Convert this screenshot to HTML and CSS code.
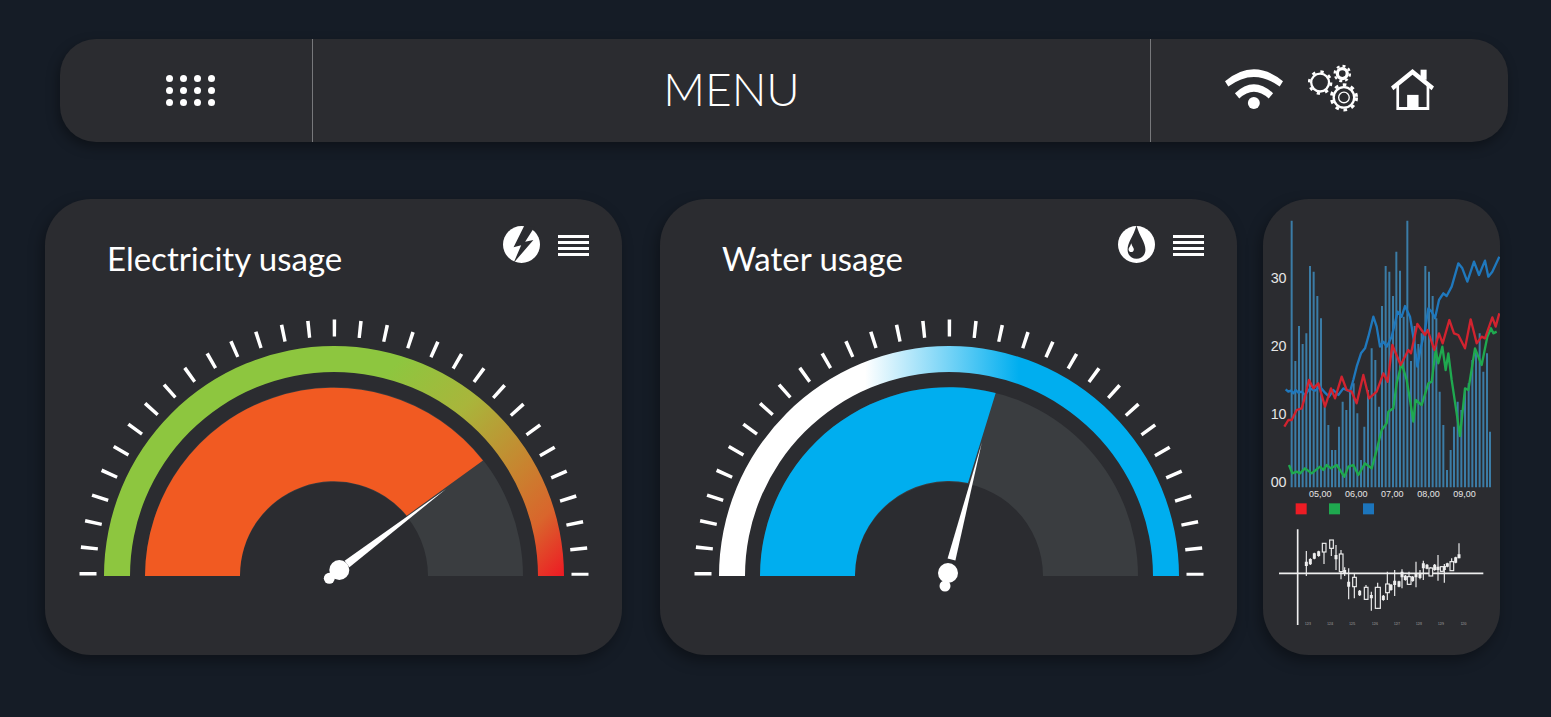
FILE: index.html
```html
<!DOCTYPE html>
<html lang="en">
<head>
    <meta charset="UTF-8">
    <title>Usage Dashboard</title>
    <link rel="stylesheet" href="styles.css">
</head>
<body>
    <!-- Top menu bar -->
    <header class="menu-bar">
        <div class="menu-left">
            <div class="dot-grid">
                <span></span><span></span><span></span><span></span>
                <span></span><span></span><span></span><span></span>
                <span></span><span></span><span></span><span></span>
            </div>
        </div>
        <div class="menu-title">MENU</div>
        <div class="menu-right">
            <svg class="icon-wifi" viewBox="0 0 175 122">
                <path d="M0 36Q87 -36 175 36L165 52Q87 -6 10 52Z"/>
                <path d="M30 72Q87 18 145 72L132 88Q87 47 43 88Z"/>
                <circle cx="87" cy="102" r="18"/>
            </svg>
            <svg class="icon-gears" viewBox="474 104 174 148">
                <g class="gear-lines">
                    <circle cx="510" cy="160" r="27" stroke-width="7"/>
                    <circle cx="510" cy="160" r="33" stroke-width="8" stroke-dasharray="10 15.9"/>
                    <circle cx="577" cy="133" r="15" stroke-width="10"/>
                    <circle cx="577" cy="133" r="23" stroke-width="7" stroke-dasharray="9 9.06"/>
                    <circle cx="582" cy="205" r="31" stroke-width="7"/>
                    <circle cx="582" cy="205" r="38" stroke-width="9" stroke-dasharray="11 13.9"/>
                    <circle cx="582" cy="205" r="16" stroke-width="4"/>
                </g>
            </svg>
            <svg class="icon-home" viewBox="724 118 128 122">
                <path d="M812 120H830V150H812Z"/>
                <path d="M724 170L788 118L852 170L845 181L788 135L731 181Z"/>
                <path d="M740 165L748 160V231H830V160L838 165V240H740Z"/>
                <path d="M772 195H806V235H772Z"/>
            </svg>
        </div>
    </header>

    <main class="card-row">
        <!-- Electricity -->
        <section class="card">
            <div class="card-head">
                <h2 class="card-title">Electricity usage</h2>
                <div class="card-tools">
                    <svg class="badge" viewBox="70 48 112 112">
                        <circle cx="126" cy="104" r="56" fill="#fff"/>
                        <path d="M135 46L102 112L125 106L102 160L162 90L137 96L166 50Z" fill="#2b2c30"/>
                    </svg>
                    <div class="lines"><span></span><span></span><span></span><span></span></div>
                </div>
            </div>
            <svg class="gauge" viewBox="0 0 577 356">
                <defs>
                    <linearGradient id="heat" gradientUnits="userSpaceOnUse" x1="40" y1="-190" x2="232" y2="-5">
                        <stop offset="0" stop-color="#8dc63f"/>
                        <stop offset="0.3" stop-color="#a9b53b"/>
                        <stop offset="0.62" stop-color="#c9822f"/>
                        <stop offset="0.8" stop-color="#d9652c"/>
                        <stop offset="1" stop-color="#ed1c24"/>
                    </linearGradient>
                    <clipPath id="top-half"><rect x="-260" y="-260" width="520" height="262"/></clipPath>
                    <g id="ticks" clip-path="url(#top-half)">
                        <circle class="tick-ring" cy="-2" r="246" stroke-dasharray="3.5 22.26" stroke-dashoffset="1.75"/>
                    </g>
                </defs>
                <g transform="translate(289 277)">
                    <use href="#ticks"/>
                    <path fill="url(#heat)" d="M-230 0A230 230 0 0 1 230 0H204A204 204 0 0 0 -204 0Z"/>
                    <path class="track" d="M-189 0A189 189 0 0 1 189 0H94A94 94 0 0 0 -94 0Z"/>
                    <path fill="#f15a22" d="M-189 0A189 189 0 0 1 149 -115.5L72.7 -60.3A94 94 0 0 0 -94 0Z"/>
                    <g class="needle">
                        <path d="M112 -87L15.4 -8.8L10.6 -15.2Z"/>
                        <circle cx="5.3" cy="-6" r="10"/>
                        <circle cx="-4.7" cy="2.3" r="5.5"/>
                    </g>
                </g>
            </svg>
        </section>

        <!-- Water -->
        <section class="card">
            <div class="card-head">
                <h2 class="card-title">Water usage</h2>
                <div class="card-tools">
                    <svg class="badge" viewBox="54 32 112 112">
                        <circle cx="110" cy="88" r="56" fill="#fff"/>
                        <path d="M110 30C102 62 83 80 83 104C83 120 95 131 110 131C125 131 137 120 137 104C137 80 118 62 110 30Z" fill="#2b2c30"/>
                        <path d="M94 84C91 94 86 98 86 103C86 108 90 111 94 111C98 111 102 108 102 103C102 98 97 94 94 84Z" fill="#fff"/>
                    </svg>
                    <div class="lines"><span></span><span></span><span></span><span></span></div>
                </div>
            </div>
            <svg class="gauge" viewBox="0 0 577 356">
                <defs>
                    <linearGradient id="cool" gradientUnits="userSpaceOnUse" x1="-150" y1="0" x2="70" y2="0">
                        <stop offset="0" stop-color="#fff"/>
                        <stop offset="0.3" stop-color="#fff"/>
                        <stop offset="1" stop-color="#00aeef"/>
                    </linearGradient>
                </defs>
                <g transform="translate(289 277)">
                    <use href="#ticks"/>
                    <path fill="url(#cool)" d="M-230 0A230 230 0 0 1 230 0H204A204 204 0 0 0 -204 0Z"/>
                    <path class="track" d="M-189 0A189 189 0 0 1 189 0H94A94 94 0 0 0 -94 0Z"/>
                    <path fill="#00aeef" d="M-189 0A189 189 0 0 1 46.7 -183L19 -93A94 94 0 0 0 -94 0Z"/>
                    <g class="needle">
                        <path d="M32.7 -133L6.4 -15.6L-1.4 -17.6Z"/>
                        <circle cx="-1" cy="-3" r="10"/>
                        <circle cx="-4" cy="10" r="5.5"/>
                    </g>
                </g>
            </svg>
        </section>

        <!-- Charts -->
        <section class="card chart-card">
            <svg class="chart" viewBox="24 -3 711 1368">
                <path class="bars" d="M110 862V62M121 862V483M132 862V378M143 862V432M154 862V400M165 862V198M176 862V215M187 862V288M198 862V355M209 862V620M220 862V675M231 862V750M241 862V750M252 862V680M263 862V605M274 862V630M285 862V570M296 862V550M307 862V640M318 862V780M328 862V680M339 862V570M350 862V445M361 862V480M372 862V620M381 862V318M392 862V198M403 862V215M414 862V288M424 862V155M435 862V212M446 862V350M457 862V62M468 862V483M479 862V378M490 862V432M500 862V400M511 862V198M522 862V215M533 862V288M544 862V355M554 862V575M565 862V675M576 862V810M587 862V750M597 862V680M608 862V605M619 862V630M630 862V570M641 862V550M652 862V480M663 862V450M674 862V400M685 862V515M696 862V460M705 862V695"/>
                <polyline class="line line-blue" points="92,568 100,575 108,572 115,580 122,570 130,578 140,575 150,585 165,565 180,572 195,560 210,578 222,590 235,570 250,585 265,565 285,575 295,540 305,500 318,460 330,445 340,410 355,350 365,380 375,440 385,425 395,440 410,410 428,335 440,350 450,318 465,350 478,430 487,500 497,445 510,390 520,325 530,335 540,355 552,300 565,280 575,288 590,260 610,190 622,205 637,245 657,185 672,225 690,182 700,230 712,215 733,170"/>
                <polyline class="line line-green" points="102,795 112,820 125,815 135,820 150,805 170,820 195,800 205,810 215,795 228,805 245,795 268,830 280,800 295,795 310,825 330,790 350,805 365,750 380,690 395,670 400,635 415,625 425,550 440,490 455,540 465,600 475,665 482,600 500,615 520,550 530,545 542,450 550,490 562,440 572,510 580,460 590,540 605,640 615,708 630,565 640,570 660,445 680,495 697,410 708,385 715,400 725,395"/>
                <polyline class="line line-red" points="88,680 100,660 110,660 125,630 140,625 150,590 162,540 175,565 190,550 210,620 228,565 240,595 260,530 275,570 290,575 305,610 325,525 342,595 365,575 385,520 398,545 412,435 437,495 460,450 468,460 487,372 510,405 518,390 538,450 552,400 563,430 583,360 597,400 610,405 630,445 647,358 665,430 680,410 690,415 712,352 722,380 733,340"/>

                <text class="axis-y" x="47" y="248">30</text>
                <text class="axis-y" x="47" y="452">20</text>
                <text class="axis-y" x="47" y="657">10</text>
                <text class="axis-y" x="47" y="860">00</text>
                <text class="axis-x" x="162" y="892">05,00</text>
                <text class="axis-x" x="270" y="892">06,00</text>
                <text class="axis-x" x="378" y="892">07,00</text>
                <text class="axis-x" x="487" y="892">08,00</text>
                <text class="axis-x" x="595" y="892">09,00</text>

                <rect x="122" y="910" width="33" height="33" fill="#ed1c24"/>
                <rect x="222" y="910" width="33" height="33" fill="#1fa94f"/>
                <rect x="324" y="910" width="33" height="33" fill="#1c75bc"/>

                <!-- candlesticks -->
                <g transform="translate(0 870)">
                    <path class="axis" d="M128 118V405M72 250H685"/>
                    <path class="wicks" d="M154 183V258M166 205V225M178 188V208M191 182V200M207 160V222M229 150V198M243 165V240M258 180V268M269 232V258M281 235V328M298 250V325M314 300V318M333 285V330M349 305V362M368 278V357M385 315V332M397 245V330M408 282V302M419 240V318M432 272V292M441 238V295M451 255V272M462 245V285M473 258V275M483 215V292M495 240V268M505 212V270M516 222V238M527 232V258M539 222V242M549 195V272M560 228V245M568 222V278M577 218V232M590 205V242M602 200V220M612 160V205"/>
                    <path class="bodies" d="M154 215V228M166 207V223M178 190V206M191 184V198M243 195V208M269 240V250M281 275V290M314 302V316M349 315V325M385 317V330M408 284V300M419 272V285M432 274V290M441 245V262M451 257V270M473 260V273M483 250V262M495 250V264M505 220V235M516 224V236M539 224V240M549 230V240M568 228V240M577 220V230M602 202V218M612 193V205"/>
                    <g class="hollow">
                        <rect x="202" y="160" width="11" height="26"/>
                        <rect x="224" y="150" width="11" height="25"/>
                        <rect x="253" y="192" width="11" height="53"/>
                        <rect x="293" y="262" width="11" height="28"/>
                        <rect x="328" y="292" width="11" height="36"/>
                        <rect x="361" y="292" width="15" height="63"/>
                        <rect x="392" y="282" width="11" height="26"/>
                        <rect x="457" y="260" width="11" height="23"/>
                        <rect x="522" y="234" width="11" height="24"/>
                        <rect x="556" y="230" width="9" height="14"/>
                        <rect x="585" y="215" width="11" height="27"/>
                    </g>
                    <g class="axis-tiny">
                        <text x="150" y="404">12/3</text>
                        <text x="217" y="404">12/4</text>
                        <text x="283" y="404">12/5</text>
                        <text x="351" y="404">12/6</text>
                        <text x="417" y="404">12/7</text>
                        <text x="483" y="404">12/8</text>
                        <text x="549" y="404">12/9</text>
                        <text x="617" y="404">12/0</text>
                    </g>
                </g>
            </svg>
        </section>
    </main>
</body>
</html>
```

FILE: styles.css
```css
* {
    box-sizing: border-box;
}

body {
    margin: 0;
    height: 717px;
    overflow: hidden;
    background: #151c26;
    font-family: Lato, "Open Sans", sans-serif;
    color: #fff;
}

/* Menu bar */
.menu-bar {
    display: flex;
    height: 103px;
    margin: 39px 43px 0 60px;
    background: #2b2c30;
    border-radius: 36px;
    box-shadow: -2px 5px 12px rgba(0,0,0,0.35);
}

.menu-left {
    width: 253px;
    display: flex;
    align-items: center;
    padding-left: 106px;
    border-right: 1px solid #77787b;
}

.dot-grid {
    display: grid;
    grid-template-columns: repeat(4, 7px);
    grid-auto-rows: 7px;
    column-gap: 7px;
    row-gap: 5px;
}

.dot-grid span {
    background: #fff;
    border-radius: 50%;
}

.menu-title {
    flex: 1;
    text-align: center;
    font-size: 46px;
    font-weight: 300;
    line-height: 99px;
}

.menu-right {
    width: 358px;
    display: flex;
    align-items: flex-start;
    gap: 25px;
    padding: 30px 0 0 74px;
    border-left: 1px solid #77787b;
}

.menu-right svg {
    fill: #fff;
    flex: none;
}

.icon-wifi {
    width: 58px;
    height: 41px;
}

.icon-gears {
    width: 58px;
    height: 49px;
    margin-top: -5px;
}

.icon-home {
    width: 43px;
    height: 41px;
}

.gear-lines circle {
    fill: none;
    stroke: #fff;
}

/* Cards */
.card-row {
    display: flex;
    gap: 38px;
    margin: 57px 0 0 45px;
}

.card {
    width: 577px;
    height: 456px;
    background: #2b2c30;
    border-radius: 46px;
    box-shadow: -3px 6px 14px rgba(0,0,0,0.35);
}

.card-head {
    display: flex;
    justify-content: space-between;
    height: 100px;
    padding: 27px 33px 0 62px;
}

.card-title {
    margin: 12px 0 0;
    font-size: 33px;
    font-weight: 400;
    line-height: 40px;
}

.card-tools {
    display: flex;
    align-items: flex-start;
    gap: 18px;
}

.badge {
    width: 37px;
    height: 37px;
}

.lines {
    display: flex;
    flex-direction: column;
    gap: 3px;
    width: 31px;
    margin-top: 9px;
}

.lines span {
    height: 3px;
    background: #fff;
}

.gauge {
    display: block;
    width: 577px;
    height: 356px;
}

.tick-ring {
    fill: none;
    stroke: #fff;
    stroke-width: 17;
}

.track {
    fill: #3a3d40;
}

.needle {
    fill: #fff;
}

/* Chart card */
.chart-card {
    width: 237px;
    margin-left: -12px;
    overflow: hidden;
}

.chart {
    display: block;
    width: 237px;
    height: 456px;
}

.chart text {
    font-family: "Liberation Sans", Arial, sans-serif;
    fill: #e6e6e6;
}

.bars {
    fill: none;
    stroke: #3b7ca6;
    stroke-width: 6;
}

.line {
    fill: none;
    stroke-width: 7;
    stroke-linejoin: round;
}

.line-blue {
    stroke: #1f78bd;
}

.line-green {
    stroke: #1fa94f;
}

.line-red {
    stroke: #d2232f;
}

.axis-y {
    font-size: 43px;
}

.axis-x {
    font-size: 27px;
}

.axis {
    fill: none;
    stroke: #eee;
    stroke-width: 5;
}

.wicks {
    fill: none;
    stroke: #eee;
    stroke-width: 3.5;
}

.bodies {
    fill: none;
    stroke: #eee;
    stroke-width: 9;
}

.hollow rect {
    fill: #2b2c30;
    stroke: #eee;
    stroke-width: 3.5;
}

.axis-tiny text {
    font-size: 9px;
    fill: #aaa;
}
```
